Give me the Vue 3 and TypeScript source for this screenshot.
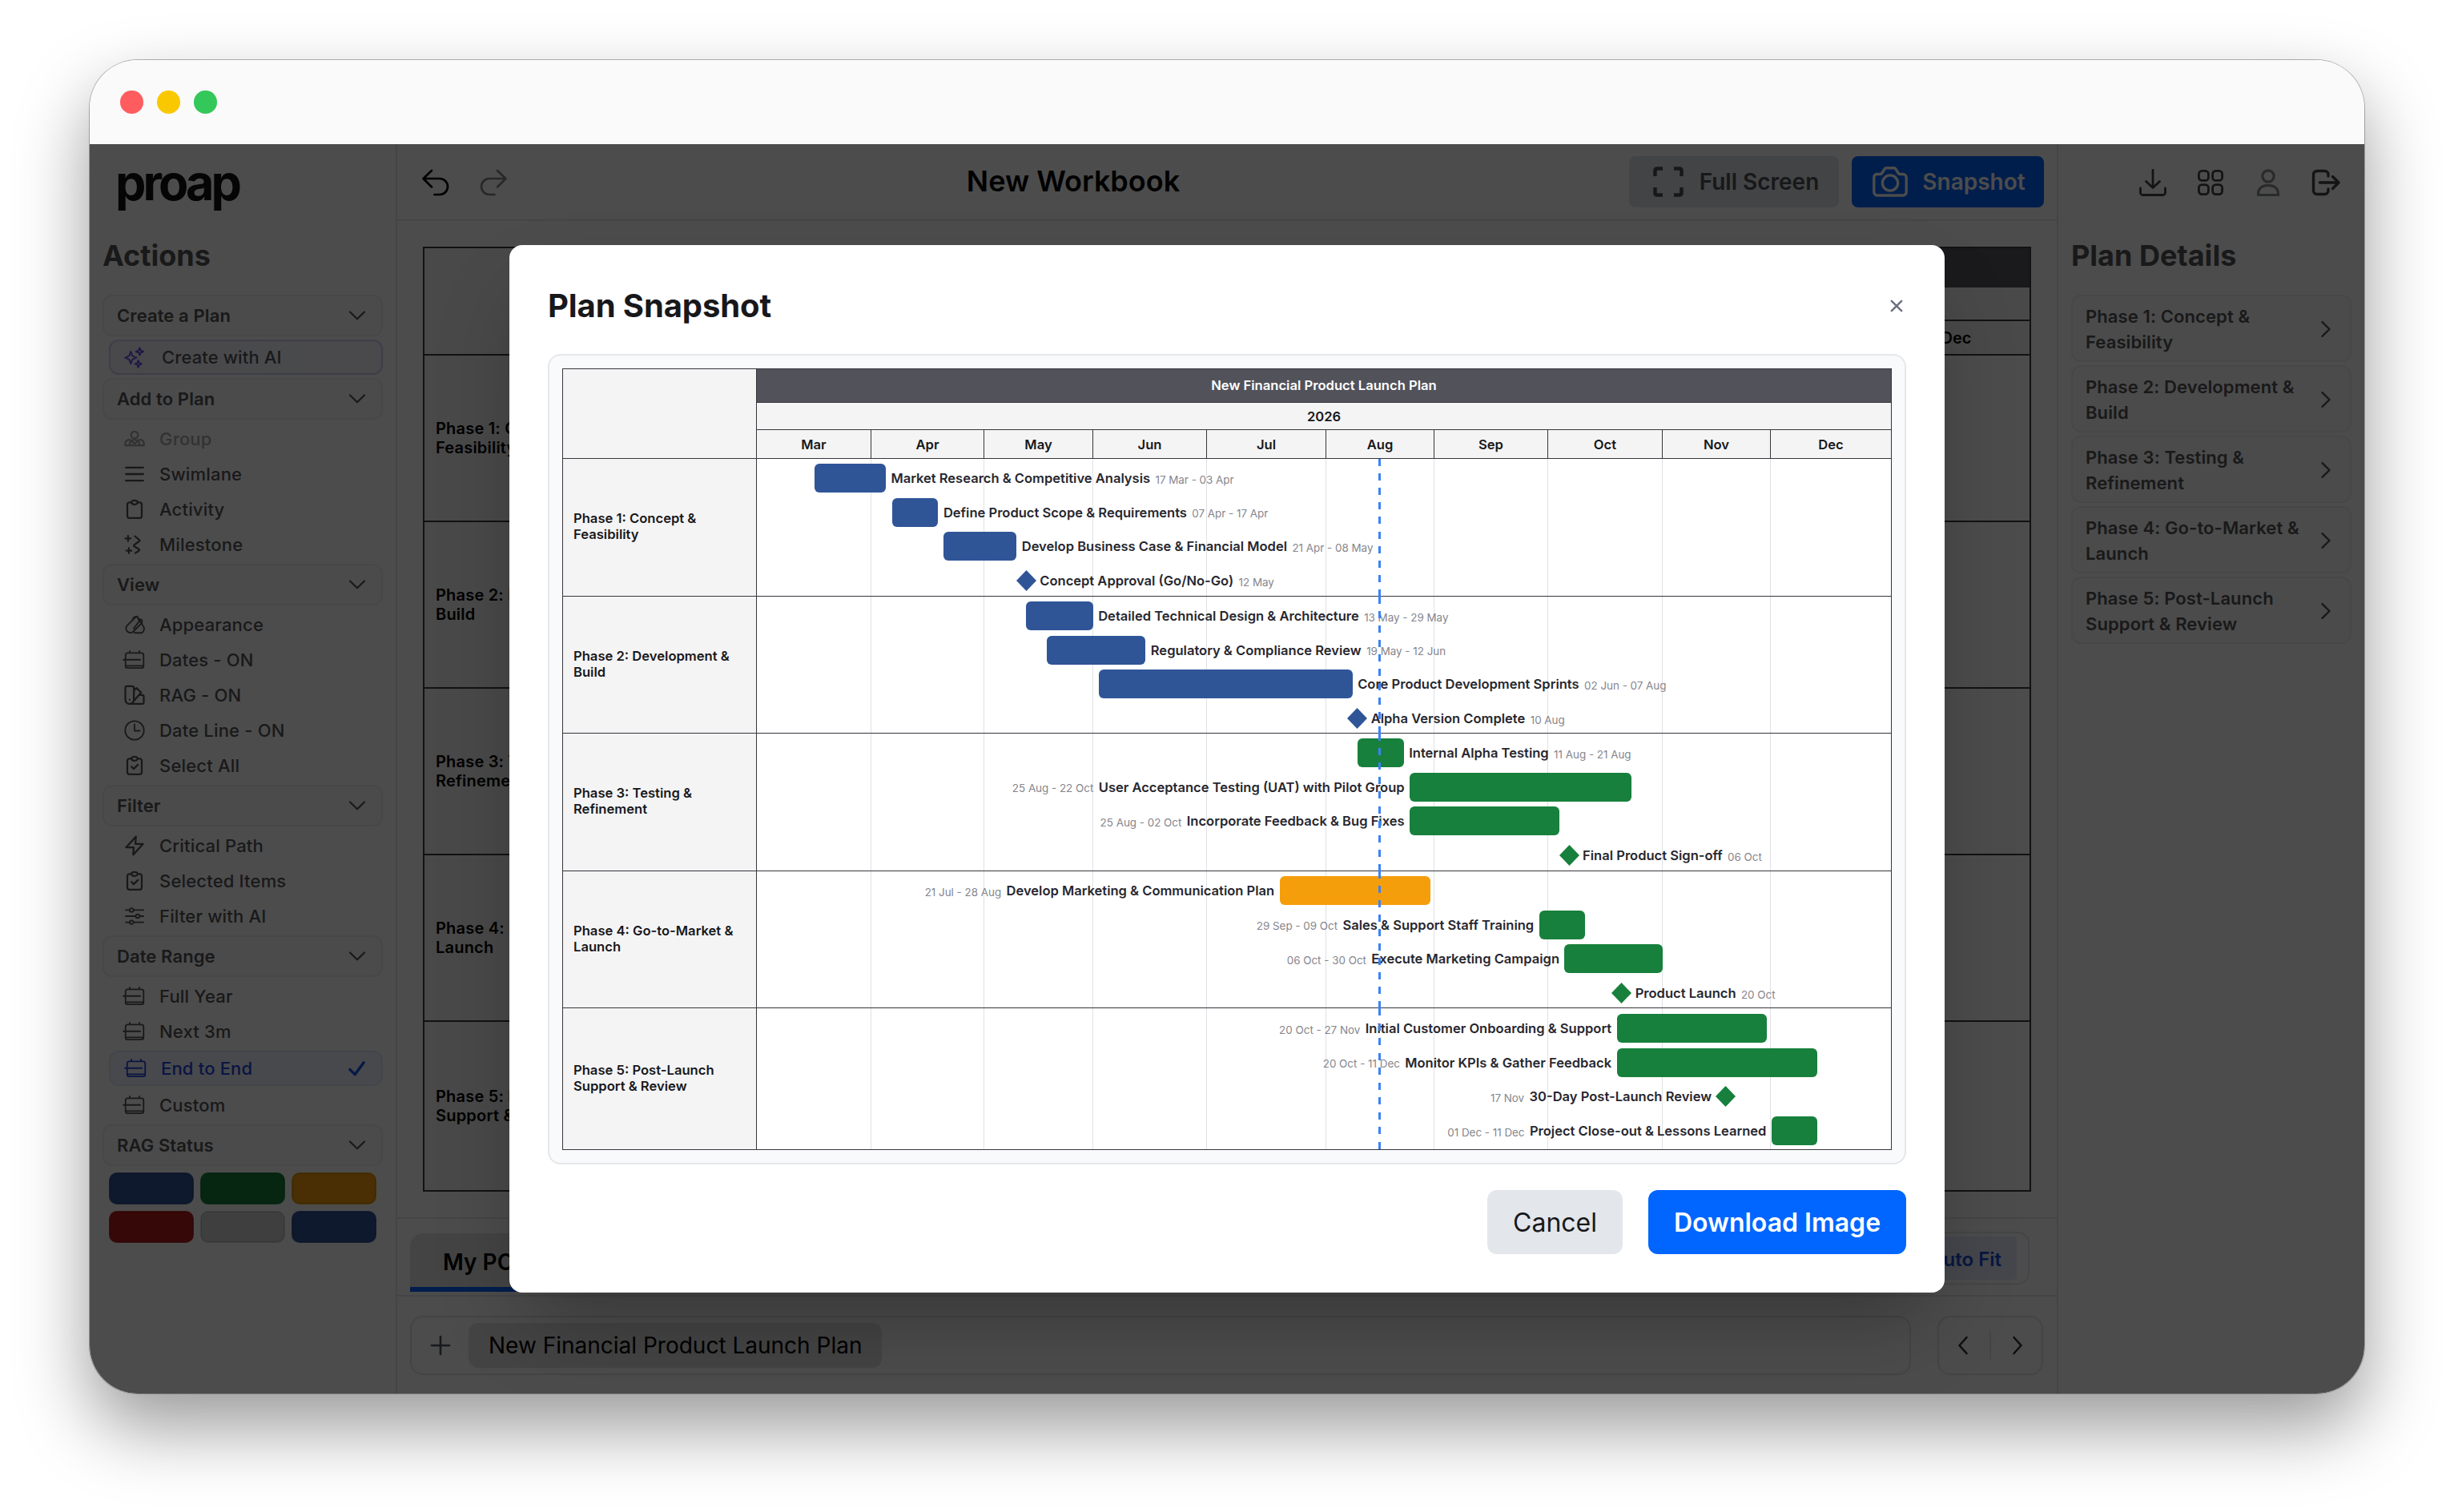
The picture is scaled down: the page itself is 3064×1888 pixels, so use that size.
<script setup lang="ts">
type IconName =
  | 'sparkles' | 'group' | 'lines' | 'clipboard' | 'milestone' | 'brush' | 'calendar'
  | 'swatch' | 'clock' | 'clipcheck' | 'bolt' | 'sliders'

interface MenuItem { label: string; icon: IconName; disabled?: boolean; active?: boolean }
interface MenuGroup { title: string; ai?: MenuItem; items: MenuItem[] }

const icons: Record<IconName, string> = {
  sparkles:
    'M8 6 L9.7 10.6 L14 12.5 L9.7 14.4 L8 19 L6.3 14.4 L2 12.5 L6.3 10.6 Z M17.5 2 L18.6 4.9 L21.5 6 L18.6 7.1 L17.5 10 L16.4 7.1 L13.5 6 L16.4 4.9 Z M16 15.5 L17 18.2 L19.5 19.2 L17 20.2 L16 23 L15 20.2 L12.5 19.2 L15 18.2 Z',
  group:
    'M12 3.5 a4 4 0 1 1 0 8 a4 4 0 1 1 0 -8 Z M6.5 19.5 V17.5 a5.5 4.5 0 0 1 11 0 V19.5 Z M7.6 13.4 C4 12.3 1.2 14.3 1.2 17.2 V19.5 H6.5 M16.4 13.4 C20 12.3 22.8 14.3 22.8 17.2 V19.5 H17.5 M9.5 15.5 L12 17.5 L14.5 15.5',
  lines: 'M2 4.5 H22 M2 12 H22 M2 19.5 H22',
  clipboard:
    'M8.5 4 H6 a2.3 2.3 0 0 0 -2.3 2.3 V19.7 A2.3 2.3 0 0 0 6 22 H18 a2.3 2.3 0 0 0 2.3 -2.3 V6.3 A2.3 2.3 0 0 0 18 4 H15.5 M8.5 4 a3.5 2.3 0 1 1 7 0 a3.5 2.3 0 1 1 -7 0 Z',
  milestone:
    'M12.5 2.5 L17.5 6.5 Q18.4 7.3 17.2 8.3 L11.6 12.4 Q10.6 13.2 11.8 14.1 L17 17.3 Q18.2 18.2 17 19.1 L13 21.7 M4.5 2 V8 M1.5 5 H7.5 M5.5 16 V22 M2.5 19 H8.5',
  brush:
    'M13 3.5 L3.2 13.3 a5 5 0 0 0 7 7 L20 10.5 M9.8 6 Q12 1.2 16 3.5 M15 2.5 L17.5 8 L11 16.5 M17.8 7 L21.5 13 a5.5 5.5 0 0 1 -1 8.5 H12 M16 5 L20.5 6.5 V11',
  calendar:
    'M4 4 H20 A2.4 2.4 0 0 1 22.4 6.4 V19 A2.4 2.4 0 0 1 20 21.4 H4 A2.4 2.4 0 0 1 1.6 19 V6.4 A2.4 2.4 0 0 1 4 4 Z M6.5 1.8 V4 M17.5 1.8 V4 M-0.8 11.8 H18.6 M2 18.8 H22',
  swatch:
    'M3 1.8 H9.4 a1.8 1.8 0 0 1 1.8 1.8 V17 a5 5 0 0 1 -5 5 a4.6 4.6 0 0 1 -4.8 -5 V3.6 A1.8 1.8 0 0 1 3 1.8 Z M11.2 6.5 L14.2 3.8 L19.6 9 L9.5 20.5 M17 11.8 H21 a1.6 1.6 0 0 1 1.6 1.6 V20.4 a1.6 1.6 0 0 1 -1.6 1.6 H6.2 M6.4 17.2 V17.4',
  clock: 'M12 1.2 a10.8 10.8 0 1 1 0 21.6 a10.8 10.8 0 1 1 0 -21.6 Z M12 5 V12.5 H18',
  clipcheck:
    'M8.5 4 H6 a2.3 2.3 0 0 0 -2.3 2.3 V19.7 A2.3 2.3 0 0 0 6 22 H18 a2.3 2.3 0 0 0 2.3 -2.3 V6.3 A2.3 2.3 0 0 0 18 4 H15.5 M8.5 4 a3.5 2.3 0 1 1 7 0 a3.5 2.3 0 1 1 -7 0 Z M8.5 13.2 L11 15.8 L15.8 11',
  bolt: 'M13.6 1.5 L2.2 14 H11 L10.4 22.5 L21.8 10 H13 Z',
  sliders:
    'M1.8 5 H6.2 M11 5 H22.2 M1.8 12 H13.2 M18 12 H22.2 M1.8 19 H6.2 M11 19 H22.2 M8.6 2.9 a2.2 2.1 0 1 1 0 4.2 a2.2 2.1 0 1 1 0 -4.2 Z M15.6 9.9 a2.2 2.1 0 1 1 0 4.2 a2.2 2.1 0 1 1 0 -4.2 Z M8.6 16.9 a2.2 2.1 0 1 1 0 4.2 a2.2 2.1 0 1 1 0 -4.2 Z',
}

const heavy: IconName[] = ['lines', 'clipboard', 'milestone', 'swatch', 'clipcheck', 'bolt', 'group']

const groups: MenuGroup[] = [
  { title: 'Create a Plan', ai: { label: 'Create with AI', icon: 'sparkles' }, items: [] },
  {
    title: 'Add to Plan',
    items: [
      { label: 'Group', icon: 'group', disabled: true },
      { label: 'Swimlane', icon: 'lines' },
      { label: 'Activity', icon: 'clipboard' },
      { label: 'Milestone', icon: 'milestone' },
    ],
  },
  {
    title: 'View',
    items: [
      { label: 'Appearance', icon: 'brush' },
      { label: 'Dates - ON', icon: 'calendar' },
      { label: 'RAG - ON', icon: 'swatch' },
      { label: 'Date Line - ON', icon: 'clock' },
      { label: 'Select All', icon: 'clipcheck' },
    ],
  },
  {
    title: 'Filter',
    items: [
      { label: 'Critical Path', icon: 'bolt' },
      { label: 'Selected Items', icon: 'clipcheck' },
      { label: 'Filter with AI', icon: 'sliders' },
    ],
  },
  {
    title: 'Date Range',
    items: [
      { label: 'Full Year', icon: 'calendar' },
      { label: 'Next 3m', icon: 'calendar' },
      { label: 'End to End', icon: 'calendar', active: true },
      { label: 'Custom', icon: 'calendar' },
    ],
  },
  { title: 'RAG Status', items: [] },
]

const ragColors = ['#30559b', '#17803c', '#f59e0b', '#b91c1c', '#d4d4d4', '#30559b']

const months = [
  { name: 'Mar', w: 143 }, { name: 'Apr', w: 141 }, { name: 'May', w: 136 }, { name: 'Jun', w: 142 },
  { name: 'Jul', w: 149 }, { name: 'Aug', w: 135 }, { name: 'Sep', w: 142 }, { name: 'Oct', w: 143 },
  { name: 'Nov', w: 135 }, { name: 'Dec', w: 150 },
]

interface Row {
  label: string; dates: string; color: 'blue' | 'green' | 'amber'
  x: number; w?: number; left?: boolean
}
interface Lane { lines: [string, string]; h: number; rows: Row[] }

/* x is measured from the left edge of the timeline; a row without w is a milestone centred on x */
const lanes: Lane[] = [
  {
    lines: ['Phase 1: Concept &', 'Feasibility'], h: 172,
    rows: [
      { label: 'Market Research & Competitive Analysis', dates: '17 Mar - 03 Apr', color: 'blue', x: 72, w: 89 },
      { label: 'Define Product Scope & Requirements', dates: '07 Apr - 17 Apr', color: 'blue', x: 169.3, w: 57.2 },
      { label: 'Develop Business Case & Financial Model', dates: '21 Apr - 08 May', color: 'blue', x: 233.3, w: 91 },
      { label: 'Concept Approval (Go/No-Go)', dates: '12 May', color: 'blue', x: 336.4 },
    ],
  },
  {
    lines: ['Phase 2: Development &', 'Build'], h: 171,
    rows: [
      { label: 'Detailed Technical Design & Architecture', dates: '13 May - 29 May', color: 'blue', x: 336.4, w: 83.4 },
      { label: 'Regulatory & Compliance Review', dates: '19 May - 12 Jun', color: 'blue', x: 362.4, w: 123 },
      { label: 'Core Product Development Sprints', dates: '02 Jun - 07 Aug', color: 'blue', x: 427.4, w: 316.4 },
      { label: 'Alpha Version Complete', dates: '10 Aug', color: 'blue', x: 749.8 },
    ],
  },
  {
    lines: ['Phase 3: Testing &', 'Refinement'], h: 172,
    rows: [
      { label: 'Internal Alpha Testing', dates: '11 Aug - 21 Aug', color: 'green', x: 749.8, w: 58 },
      { label: 'User Acceptance Testing (UAT) with Pilot Group', dates: '25 Aug - 22 Oct', color: 'green', x: 815, w: 277, left: true },
      { label: 'Incorporate Feedback & Bug Fixes', dates: '25 Aug - 02 Oct', color: 'green', x: 815, w: 187, left: true },
      { label: 'Final Product Sign-off', dates: '06 Oct', color: 'green', x: 1014.2 },
    ],
  },
  {
    lines: ['Phase 4: Go-to-Market &', 'Launch'], h: 171,
    rows: [
      { label: 'Develop Marketing & Communication Plan', dates: '21 Jul - 28 Aug', color: 'amber', x: 652.6, w: 188.3, left: true },
      { label: 'Sales & Support Staff Training', dates: '29 Sep - 09 Oct', color: 'green', x: 976.6, w: 57.6, left: true },
      { label: 'Execute Marketing Campaign', dates: '06 Oct - 30 Oct', color: 'green', x: 1008.4, w: 123, left: true },
      { label: 'Product Launch', dates: '20 Oct', color: 'green', x: 1079.8 },
    ],
  },
  {
    lines: ['Phase 5: Post-Launch', 'Support & Review'], h: 176,
    rows: [
      { label: 'Initial Customer Onboarding & Support', dates: '20 Oct - 27 Nov', color: 'green', x: 1073.5, w: 187.4, left: true },
      { label: 'Monitor KPIs & Gather Feedback', dates: '20 Oct - 11 Dec', color: 'green', x: 1073.5, w: 250.7, left: true },
      { label: '30-Day Post-Launch Review', dates: '17 Nov', color: 'green', x: 1209, left: true },
      { label: 'Project Close-out & Lessons Learned', dates: '01 Dec - 11 Dec', color: 'green', x: 1266.8, w: 57.4, left: true },
    ],
  },
]

const TIMELINE_W = 1416

function rowStyle(r: Row) {
  const half = 12.5
  const start = r.w === undefined ? r.x - half : r.x
  const end = r.w === undefined ? r.x + half : r.x + r.w
  return r.left ? { paddingRight: `${TIMELINE_W - end}px` } : { paddingLeft: `${start}px` }
}
</script>

<template>
  <div class="stage">
    <div class="window">
      <div class="titlebar">
        <i class="dot red"></i><i class="dot yellow"></i><i class="dot green"></i>
      </div>

      <div class="app">
        <aside class="sidebar">
          <div class="logo">proap</div>
          <h2 class="side-title">Actions</h2>
          <nav class="menu">
            <template v-for="g in groups" :key="g.title">
              <div class="group-head">
                <span>{{ g.title }}</span>
                <svg class="chev-down" viewBox="0 0 20 12"><path d="M1 1.5 L10 10.3 L19 1.5" /></svg>
              </div>
              <div v-if="g.ai" class="ai-item">
                <svg class="ico" viewBox="0 0 24 24"><path :d="icons[g.ai.icon]" /></svg>
                <span>{{ g.ai.label }}</span>
              </div>
              <div v-if="g.items.length" class="items">
                <div
                  v-for="it in g.items" :key="it.label" class="item"
                  :class="{ disabled: it.disabled, active: it.active }"
                >
                  <svg class="ico" :class="{ heavy: heavy.includes(it.icon) }" viewBox="0 0 24 24">
                    <path :d="icons[it.icon]" />
                  </svg>
                  <span>{{ it.label }}</span>
                  <svg v-if="it.active" class="tick" viewBox="0 0 22 20"><path d="M2 11 L8.5 17.5 L20 2" /></svg>
                </div>
              </div>
            </template>
          </nav>
          <div class="rag">
            <i v-for="(c, i) in ragColors" :key="i" :style="{ background: c }"></i>
          </div>
        </aside>

        <main class="main">
          <header class="toolbar">
            <div class="history">
              <svg viewBox="0 0 34 34"><path d="M12 2 L1.5 12 L12 22.5 M1.5 12 H22 a10 10 0 0 1 0 20 H15.5" /></svg>
              <svg class="dim" viewBox="0 0 34 34"><path d="M22 2 L32.5 12 L22 22.5 M32.5 12 H12 a10 10 0 0 0 0 20 H18.5" /></svg>
            </div>
            <h1 class="book">New Workbook</h1>
            <div class="tools">
              <button class="btn-full">
                <svg viewBox="0 0 38 38"><path d="M2.5 12 V4.5 A2 2 0 0 1 4.5 2.5 H12 M26 2.5 H33.5 A2 2 0 0 1 35.5 4.5 V12 M35.5 26 V33.5 A2 2 0 0 1 33.5 35.5 H26 M12 35.5 H4.5 A2 2 0 0 1 2.5 33.5 V26" /></svg>
                <span>Full Screen</span>
              </button>
              <button class="btn-snap">
                <svg viewBox="0 0 44 38"><path d="M5 9.5 H9.5 Q11 9.5 12 8 L14.8 3.4 Q15.7 1.8 17.6 1.8 H26.4 Q28.3 1.8 29.2 3.4 L32 8 Q33 9.5 34.5 9.5 H38 A4.2 4.2 0 0 1 42.2 13.7 V31.8 A4.2 4.2 0 0 1 38 36 H6 A4.2 4.2 0 0 1 1.8 31.8 V13.7 A4.2 4.2 0 0 1 5 9.5 Z" /><circle cx="22" cy="20.5" r="9.6" /></svg>
                <span>Snapshot</span>
              </button>
            </div>
          </header>

          <section class="board">
            <div class="bg-chart">
              <div class="bg-labels">
                <div class="bg-corner"></div>
                <div v-for="l in lanes" :key="l.lines[0]" class="bg-label">
                  <span>{{ l.lines[0] }}</span><span>{{ l.lines[1] }}</span>
                </div>
              </div>
              <div class="bg-lanes">
                <div class="bg-band"></div>
                <div class="bg-year"></div>
                <div class="bg-months"><span>Dec</span></div>
                <div v-for="l in lanes" :key="l.lines[0]" class="bg-lane"></div>
              </div>
            </div>
          </section>

          <div class="tabs">
            <div class="tab">My POAPs</div>
            <div class="fit"><span>Auto Fit</span></div>
          </div>
          <div class="plans">
            <div class="plan-list">
              <svg class="plus" viewBox="0 0 22 22"><path d="M11 0 V22 M0 11 H22" /></svg>
              <span class="chip">New Financial Product Launch Plan</span>
            </div>
            <div class="pager">
              <svg viewBox="0 0 12 22"><path d="M10.5 1 L1.5 11 L10.5 21" /></svg>
              <i></i>
              <svg viewBox="0 0 12 22"><path d="M1.5 1 L10.5 11 L1.5 21" /></svg>
            </div>
          </div>
        </main>

        <aside class="details">
          <div class="account">
            <svg viewBox="0 0 34 34"><path d="M17 1.5 V23 M8.5 15.5 L17 23.5 L25.5 15.5 M1.5 24 V29.5 A3 3 0 0 0 4.5 32.5 H29.5 A3 3 0 0 0 32.5 29.5 V24" /></svg>
            <svg viewBox="0 0 34 34"><rect x="2.4" y="2.4" width="12" height="12" rx="4" /><rect x="19.6" y="2.4" width="12" height="12" rx="4" /><rect x="2.4" y="19.6" width="12" height="12" rx="4" /><rect x="19.6" y="19.6" width="12" height="12" rx="4" /></svg>
            <svg class="faint" viewBox="0 0 34 34"><circle cx="17" cy="9" r="7.2" /><path d="M4.4 32.5 Q4.4 20.5 17 20.5 Q29.6 20.5 29.6 32.5 Z" /></svg>
            <svg class="thick" viewBox="0 0 34 34"><path d="M20 9 V7 A4.5 4.5 0 0 0 15.5 2.5 H6 A4.5 4.5 0 0 0 1.5 7 V27 A4.5 4.5 0 0 0 6 31.5 H15.5 A4.5 4.5 0 0 0 20 27 V25 M9.5 17 H32.5 M25.5 9.5 L33 17 L25.5 24.5" /></svg>
          </div>
          <h2 class="side-title">Plan Details</h2>
          <div class="cards">
            <div v-for="l in lanes" :key="l.lines[0]" class="card">
              <span>{{ l.lines[0] }}<br />{{ l.lines[1] }}</span>
              <svg viewBox="0 0 12 20"><path d="M1.5 1.2 L10.5 10 L1.5 18.8" /></svg>
            </div>
          </div>
        </aside>

        <div class="overlay"></div>

        <div class="modal">
          <div class="modal-head">
            <h2>Plan Snapshot</h2>
            <svg viewBox="0 0 16 16"><path d="M1.8 1.8 L14.2 14.2 M14.2 1.8 L1.8 14.2" /></svg>
          </div>
          <div class="preview">
            <div class="chart">
              <div class="labels">
                <div class="corner"></div>
                <div v-for="l in lanes" :key="l.lines[0]" class="label" :style="{ height: l.h + 'px' }">
                  <span>{{ l.lines[0] }}</span><span>{{ l.lines[1] }}</span>
                </div>
              </div>
              <div class="timeline">
                <div class="band">New Financial Product Launch Plan</div>
                <div class="year">2026</div>
                <div class="months">
                  <span v-for="m in months" :key="m.name" :style="{ width: m.w + 'px' }">{{ m.name }}</span>
                </div>
                <div class="canvas">
                  <div class="gridlines">
                    <i v-for="m in months" :key="m.name" :style="{ width: m.w + 'px' }"></i>
                  </div>
                  <div v-for="l in lanes" :key="l.lines[0]" class="lane" :style="{ height: l.h + 'px' }">
                    <div
                      v-for="r in l.rows" :key="r.label" class="row"
                      :class="{ left: r.left, ms: r.w === undefined }" :style="rowStyle(r)"
                    >
                      <i v-if="r.w !== undefined" class="bar" :class="r.color" :style="{ width: r.w + 'px' }"></i>
                      <svg v-else class="diamond" :class="r.color" viewBox="0 0 25 26"><path d="M12.5 0 L25 13 L12.5 26 L0 13 Z" /></svg>
                      <b>{{ r.label }}</b>
                      <em>{{ r.dates }}</em>
                    </div>
                    <i class="today"></i>
                  </div>
                </div>
              </div>
            </div>
          </div>
          <div class="actions">
            <button class="cancel">Cancel</button>
            <button class="download">Download Image</button>
          </div>
        </div>
      </div>
    </div>
  </div>
</template>

<style>
html, body { margin: 0; background: #fff; }
</style>

<style scoped>
* { box-sizing: border-box; }
.stage {
  width: 3064px; height: 1888px; padding: 75px 112px 0; overflow: hidden; background: #fff;
  font-family: Inter, "Liberation Sans", sans-serif; color: #000;
}
.window {
  width: 2840px; height: 1665px; border-radius: 60px; overflow: hidden; background: #fafafa;
  box-shadow: 0 0 0 1px rgba(0, 0, 0, .28), 0 42px 90px rgba(0, 0, 0, .4);
}
.titlebar { height: 105px; display: flex; align-items: center; gap: 17.5px; padding-left: 38px; background: #fafafa; }
.dot { width: 28.5px; height: 28.5px; border-radius: 50%; }
.dot.red { background: #ff5c60; }
.dot.yellow { background: #fac800; }
.dot.green { background: #34c759; }

svg { fill: none; stroke: currentColor; stroke-linecap: round; stroke-linejoin: round; flex: none; overflow: visible; }
h1, h2 { margin: 0; }
button { border: 0; font-family: inherit; display: flex; align-items: center; justify-content: center; }

.app { position: relative; height: 1560px; display: flex; background: #fff; }
.overlay { position: absolute; inset: 0; background: rgba(0, 0, 0, .7); }

.sidebar { width: 384px; border-right: 2px solid #e5e7eb; padding: 0 16px; flex: none; color: #555557; }
.logo { height: 111px; padding: 10px 0 0 16px; font-size: 61px; line-height: 76px; font-weight: 700; letter-spacing: -3.9px; color: #111; }
.side-title { font-size: 36px; line-height: 44px; font-weight: 700; color: #555557; }
.sidebar .side-title { margin-top: 6px; }
.menu { margin-top: 27px; display: flex; flex-direction: column; }
.group-head {
  height: 52px; border: 2px solid #efefef; border-radius: 12px; background: #fafafa; padding: 0 20px 0 16px;
  width: 350px; display: flex; align-items: center; justify-content: space-between;
  font-size: 22px; font-weight: 600; letter-spacing: .1px;
}
.chev-down { width: 20px; height: 12px; stroke-width: 2.2; }
.ico { width: 26px; height: 26px; stroke-width: 1.7; }
.ico.heavy { stroke-width: 2.1; }
.ai-item {
  height: 44px; width: 342px; margin: 4px 0 4px 8px; border: 2px solid #d2cff5; border-radius: 12px; padding-left: 16px;
  background: linear-gradient(90deg, #f3f4fb, #f8f9ff); display: flex; align-items: center; font-size: 22px; font-weight: 500;
  letter-spacing: .12px; gap: 20px;
}
.ai-item svg { color: #6e4ee8; width: 28px; height: 28px; }
.items { padding: 2px 0; }
.item { height: 44px; display: flex; align-items: center; gap: 18px; padding-left: 27px; font-size: 22px; font-weight: 500; letter-spacing: .18px; }
.item.disabled { color: #a9a9ab; }
.item.active {
  width: 342px; margin: 2px 0 2px 8px; padding: 0 20px 0 19px; border: 2px solid #e0e8fa; border-radius: 12px;
  background: #eef4ff; color: #2a44e0;
}
.item .tick { width: 21px; height: 19px; margin-left: auto; stroke-width: 3.6; color: #1f55e8; }
.rag { margin: 8px 0 0 8px; display: grid; grid-template-columns: repeat(3, 106px); gap: 8px; }
.rag i { height: 40px; border-radius: 10px; border: 1.5px solid rgba(255, 255, 255, .14); box-shadow: inset 0 0 0 1px rgba(0, 0, 0, .15); }

.main { width: 2074px; border-right: 2px solid #e5e7eb; flex: none; display: flex; flex-direction: column; }
.toolbar { height: 96px; border-bottom: 2px solid #e5e7eb; flex: none; display: flex; justify-content: space-between; padding: 0 16px 0 31px; position: relative; }
.history { display: flex; gap: 38px; padding-top: 31px; }
.history svg { width: 34px; height: 34px; stroke-width: 2.7; }
.history .dim { color: #858585; }
.book { position: absolute; left: 0; right: 0; top: 24px; padding-right: 384px; text-align: center; font-size: 36px; line-height: 44px; font-weight: 600; }
.tools { display: flex; gap: 16px; padding-top: 15px; }
.tools button { height: 64px; border-radius: 8px; font-size: 28px; font-weight: 600; padding: 0; }
.tools .btn-full { width: 262px; background: #e2e5e9; color: #4f5257; gap: 20px; padding-left: 5px; }
.btn-full svg { width: 38px; height: 38px; stroke-width: 4.5; stroke-linecap: butt; }
.tools .btn-snap { width: 240px; background: #0064ff; color: #fff; gap: 18px; padding-left: 3px; }
.btn-snap svg { width: 44px; height: 38px; stroke-width: 3.4; }

.board { padding: 32px 0 0 32px; flex: none; height: 1246px; border-bottom: 2px solid #e5e7eb; }
.bg-chart { width: 2008px; height: 1180px; border: 2px solid #3c3c40; display: flex; }
.bg-labels { width: 242px; background: #f6f6f6; border-right: 2px solid #3c3c40; flex: none; }
.bg-corner { height: 134px; border-bottom: 2px solid #3c3c40; }
.bg-label, .bg-lane { height: 208px; border-bottom: 2px solid #3c3c40; }
.bg-label:last-child, .bg-lane:last-child { border-bottom: 0; height: 210px; }
.bg-label {
  display: flex; flex-direction: column; justify-content: center; padding-left: 14px;
  font-size: 20px; line-height: 24px; font-weight: 600; white-space: nowrap; letter-spacing: .2px;
}
.bg-lanes { flex: 1; }
.bg-band { height: 49px; background: #58585f; }
.bg-year { height: 42px; background: #f6f6f6; border-bottom: 2px solid #3c3c40; }
.bg-months { height: 43px; background: #f6f6f6; border-bottom: 2px solid #3c3c40; display: flex; justify-content: flex-end; font-size: 20px; font-weight: 600; line-height: 43px; }
.bg-months span { width: 183px; text-align: center; }

.tabs { height: 97px; border-bottom: 2px solid #e5e7eb; padding: 18px 34px 0 16px; display: flex; justify-content: space-between; flex: none; }
.tab { width: 220px; height: 73px; background: #e3e3e3; border-bottom: 6px solid #0064ff; border-radius: 16px 16px 0 0; padding-left: 41px; font-size: 28px; line-height: 72px; font-weight: 600; }
.fit { height: 66px; width: 200px; margin-top: -2px; border: 2px solid #e5e7eb; border-radius: 14px; padding: 4px 14px 4px 30px; display: flex; }
.fit span { flex: 1; background: #e6effd; border-radius: 4px; color: #1d4fd8; font-size: 24px; font-weight: 600; line-height: 57px; text-align: right; padding-right: 19px; }
.plans { display: flex; justify-content: space-between; padding: 24px 17px 0 16px; }
.plan-list { width: 1874px; height: 74px; border: 2px solid #e2e5ea; border-radius: 16px; display: flex; align-items: center; padding-left: 25px; }
.plus { width: 22px; height: 22px; stroke-width: 2.6; color: #4b5563; }
.chip { margin-left: 24px; height: 56px; line-height: 56px; padding: 0 25px; border-radius: 12px; background: #e3e3e3; font-size: 28px; }
.pager { width: 132px; height: 74px; border: 2px solid #e2e5ea; border-radius: 16px; display: flex; align-items: center; justify-content: space-between; padding: 0 24px; color: #333; }
.pager svg { width: 12px; height: 22px; stroke-width: 2.6; }
.pager i { width: 2px; height: 36px; background: #e5e7eb; }

.details { flex: 1; padding: 0 16px; color: #555557; }
.account { display: flex; justify-content: flex-end; gap: 38px; padding: 31px 15px 0 0; color: #444; }
.account svg { width: 34px; height: 34px; stroke-width: 2.8; }
.account .faint { color: #878c90; stroke-width: 3.2; }
.account .thick { stroke-width: 3.4; }
.details .side-title { margin-top: 52px; }
.cards { margin-top: 27px; display: flex; flex-direction: column; gap: 4px; }
.card {
  width: 350px; height: 84px; border: 2px solid #efefef; border-radius: 12px; background: #fafafa; padding: 1px 24px 0 16px;
  display: flex; align-items: center; justify-content: space-between; font-size: 22px; line-height: 32px; font-weight: 600; letter-spacing: .1px;
}
.card svg { width: 12px; height: 20px; stroke-width: 2.4; }

.modal {
  position: absolute; left: 524px; top: 126px; width: 1792px; height: 1308px; padding: 48px; border-radius: 16px;
  background: #fff; box-shadow: 0 50px 100px -24px rgba(0, 0, 0, .3);
}
.modal-head { display: flex; align-items: center; justify-content: space-between; height: 56px; padding-right: 4px; }
.modal-head h2 { font-size: 40px; font-weight: 700; color: #18181b; line-height: 56px; letter-spacing: -.1px; }
.modal-head svg { width: 16px; height: 16px; stroke-width: 2.4; color: #6b7080; }
.preview { margin-top: 32px; height: 1012px; border: 2px solid #e5e7eb; border-radius: 16px; background: #f9fafc; padding: 16px; }
.chart { height: 976px; width: 1660px; border: 1px solid #36363c; display: flex; }
.labels { width: 242px; background: #f4f4f5; border-right: 1px solid #36363c; flex: none; }
.corner { height: 112px; border-bottom: 1px solid #36363c; }
.label {
  border-bottom: 1px solid #36363c; display: flex; flex-direction: column; justify-content: center; padding: 0 0 3px 13px;
  font-size: 16.6px; line-height: 20px; font-weight: 600; color: #18181b; white-space: nowrap;
}
.label:last-child, .lane:last-child { border-bottom: 0; }
.timeline { width: 1416px; flex: none; font-size: 16.6px; font-weight: 600; text-align: center; color: #18181b; }
.band { height: 42px; background: #52525b; color: #fff; line-height: 41px; border-bottom: 1px solid #36363c; }
.year { height: 34px; background: #f4f4f5; line-height: 34px; border-bottom: 1px solid #36363c; }
.months { height: 36px; background: #f4f4f5; line-height: 36px; border-bottom: 1px solid #36363c; display: flex; }
.months span { border-right: 1px solid #36363c; flex: none; }
.months span:last-child, .gridlines i:last-child { border-right: 0; }
.canvas { position: relative; background: #fff; height: 862px; }
.gridlines { position: absolute; inset: 0; display: flex; }
.gridlines i { border-right: 1px solid #dfe1e5; flex: none; }
.lane { position: relative; border-bottom: 1px solid #36363c; padding-top: 3px; }
.lane:last-child { padding-top: 4px; }
.row { height: 42.6px; display: flex; align-items: center; gap: 6.4px; white-space: nowrap; }
.row.left { flex-direction: row-reverse; }
.row.ms { gap: 4.4px; }
.row b { font-weight: 600; font-size: 16.55px; color: #27272f; }
.row em { font-style: normal; font-weight: 400; font-size: 13.4px; color: #85858d; padding-top: 3px; }
.row.ms em { margin: 0 2px; }
.bar { height: 36px; border-radius: 6px; flex: none; }
.diamond { width: 25px; height: 26px; stroke: none; }
.bar.blue { background: #2f5597; }
.bar.green { background: #17803c; }
.bar.amber { background: #f59e0b; }
.diamond.blue { fill: #2f5597; }
.diamond.green { fill: #17803c; }
.today {
  position: absolute; left: 776px; top: 0; bottom: -1px; width: 3px;
  background: repeating-linear-gradient(#3b82f6 0 5.263%, transparent 5.263% 10.526%);
}
.lane:last-child .today { bottom: 0; }
.actions { display: flex; justify-content: flex-end; gap: 32px; margin-top: 32px; }
.actions button { height: 80px; border-radius: 12px; font-size: 32px; padding: 0; }
.cancel { width: 169px; background: #e3e6ea; color: #18181b; }
.download { width: 322px; background: #0066ff; color: #fff; font-weight: 600; }
</style>
